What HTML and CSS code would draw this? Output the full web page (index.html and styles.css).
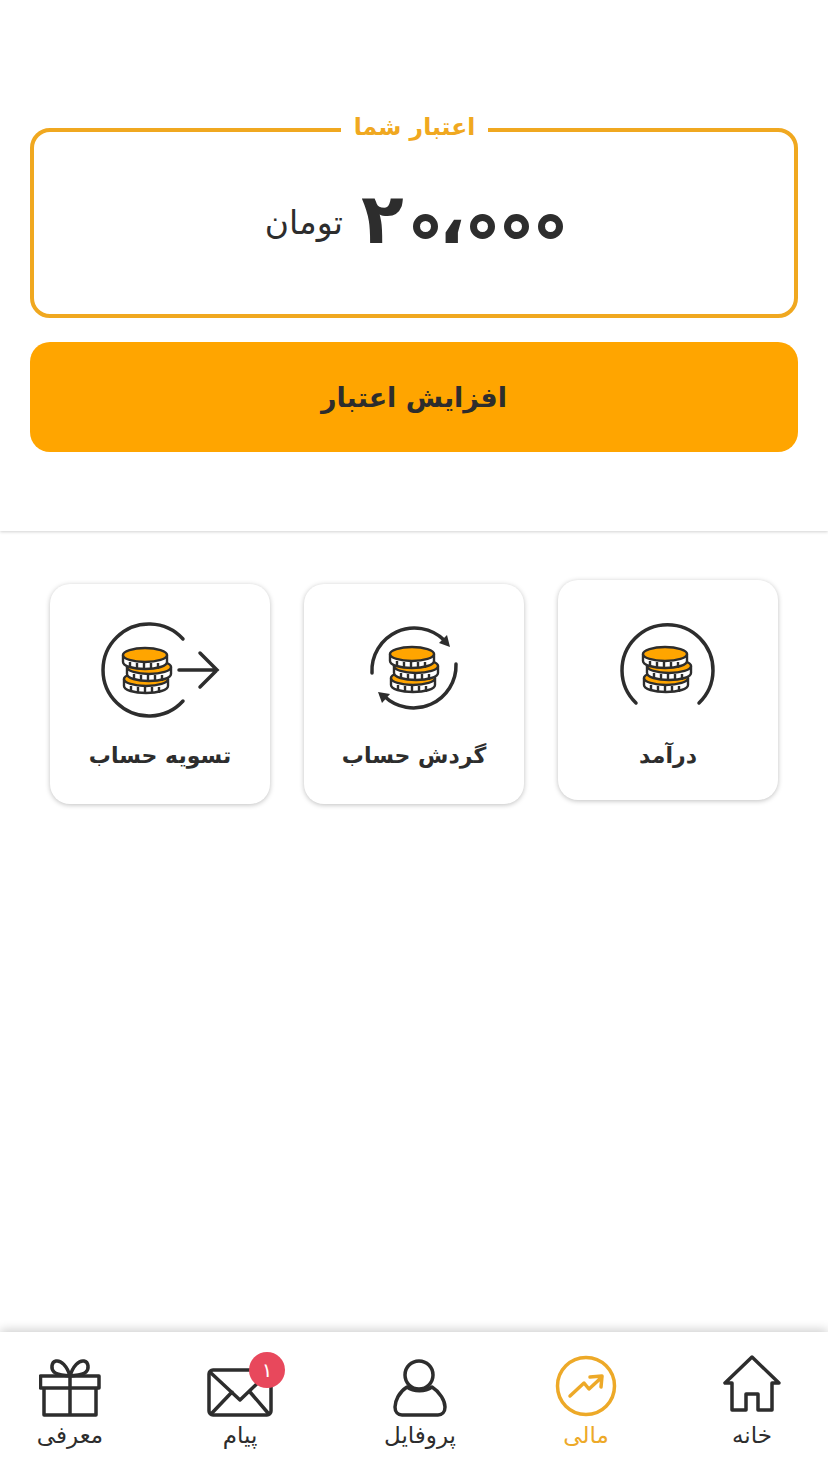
FILE: index.html
```html
<!DOCTYPE html>
<html lang="fa" dir="rtl">

<head>
  <meta charset="utf-8">
  <title>مالی</title>
  <link rel="stylesheet" href="styles.css">
</head>

<body>
  <!-- shared coin stack, used by the three cards -->
  <svg class="defs" width="0" height="0">
    <defs>
      <g id="coin">
        <path d="M1 8v7c0 4 10 7 22 7s22-3 22-7V8z" fill="#fff" stroke="#2d2d2d" stroke-width="2.400" stroke-linejoin="round" />
        <path d="M8 15v6M15 16v6M22 16v6M29 16v6M36 16v6" stroke="#2d2d2d" stroke-width="2.400" />
        <ellipse cx="23" cy="8" rx="22" ry="7" fill="#ffa500" stroke="#2d2d2d" stroke-width="2.400" />
      </g>
      <g id="coins">
        <use href="#coin" x="1" y="24" />
        <use href="#coin" x="4" y="12" />
        <use href="#coin" x="0" y="0" />
      </g>
    </defs>
  </svg>

  <section class="credit">
    <div class="credit-box">
      <div class="credit-title">اعتبار شما</div>
      <div class="credit-amount">
        <span class="amount"><span>۲</span><span class="zero">۰</span><span class="sep">،</span><span class="zero">۰</span><span class="zero">۰</span><span class="zero">۰</span></span>
        <span class="unit">تومان</span>
      </div>
    </div>
    <button class="add-btn">افزایش اعتبار</button>
  </section>

  <section class="cards">
    <a class="card card-first">
      <svg class="card-icon" width="100" height="100" viewBox="0 0 100 100">
        <path class="ring" d="M18 83A45.5 45.5 0 1 1 81 83" />
        <use href="#coins" x="24" y="26" />
      </svg>
      <span>درآمد</span>
    </a>
    <a class="card">
      <svg class="card-icon" width="100" height="100" viewBox="0 0 100 100">
        <path class="ring" d="M8 53A42.5 42.5 0 0 1 80 20" />
        <path d="M86 27L75 23L83 15z" fill="#2d2d2d" />
        <path class="ring" d="M92 44A42.5 42.5 0 0 1 20 76" />
        <path d="M14 72L26 74L18 83z" fill="#2d2d2d" />
        <use href="#coins" x="25" y="26" />
      </svg>
      <span>گردش حساب</span>
    </a>
    <a class="card">
      <svg class="card-icon" width="120" height="100" viewBox="0 0 120 100">
        <path class="ring" d="M83 19A46 46 0 1 0 83 81" />
        <path class="ring" d="M79 50H117M100 33L117 50L100 67" />
        <use href="#coins" x="22" y="27" />
      </svg>
      <span>تسویه حساب</span>
    </a>
  </section>

  <nav class="tabbar">
    <a class="tab tab-home">
      <svg width="60" height="62" viewBox="0 0 60 62">
        <path class="line" d="M30 2L3 28H10V55H24V39H36V55H50V28H57z" />
      </svg>
      <span>خانه</span>
    </a>
    <a class="tab tab-money active">
      <svg width="62" height="62" viewBox="0 0 62 62">
        <circle class="line" cx="31" cy="31" r="28.500" />
        <path class="line" d="M15 41L29 28L34 34L47 22M35 22L47 21L46 32" />
      </svg>
      <span>مالی</span>
    </a>
    <a class="tab tab-profile">
      <svg width="56" height="60" viewBox="0 0 56 60">
        <circle class="line" cx="27" cy="18" r="14" />
        <path class="line" d="M15 30C7 35 3 44 3 50C3 55 6 58 10 58H46C50 58 53 55 53 50C53 44 48 35 40 30C33 35 22 35 15 30z" />
      </svg>
      <span>پروفایل</span>
    </a>
    <a class="tab tab-msg">
      <span class="badge">۱</span>
      <svg width="68" height="50" viewBox="0 0 68 50">
        <rect class="line" x="3" y="3" width="62" height="45" rx="4" />
        <path class="line" d="M5 6L34 33L62 6M6 46L26 25M62 46L44 25" />
      </svg>
      <span>پیام</span>
    </a>
    <a class="tab tab-gift">
      <svg width="62" height="60" viewBox="0 0 62 60">
        <path class="line" d="M5 31H57V58H5zM1.500 19H60V31H1.500zM31 19V58" />
        <path class="line" d="M31 19C28 9 22 3 17 4C12 5 12 12 15 15C18 18 24 18 31 19C34 9 40 3 45 4C50 5 50 12 47 15C44 18 38 18 31 19z" />
      </svg>
      <span>معرفی</span>
    </a>
  </nav>
</body>

</html>
```

FILE: styles.css
```css
* {
  box-sizing: border-box;
}

body {
  margin: 0;
  height: 1472px;
  display: flex;
  flex-direction: column;
  background: white;
  color: #2d2d2d;
  font-family: "DejaVu Sans", sans-serif;
}

.defs {
  position: absolute;
}

.credit {
  padding: 128px 30px 79px;
  box-shadow: 0 1px 3px rgba(0, 0, 0, 0.18);
}

.credit-box {
  position: relative;
  height: 190px;
  border: 4px solid #f0a820;
  border-radius: 20px;
  display: flex;
  align-items: center;
  justify-content: center;
  padding-bottom: 8px;
}

.credit-title {
  position: absolute;
  top: -24px;
  left: 307px;
  width: 147px;
  background: white;
  color: #f0a820;
  font-size: 23.500px;
  font-weight: bold;
  text-align: center;
  line-height: 38px;
}

.credit-amount {
  display: flex;
  align-items: center;
  gap: 18px;
}

.amount {
  direction: ltr;
  display: flex;
  align-items: center;
  gap: 9px;
  font-size: 70px;
  line-height: 80px;
  font-weight: bold;
}

/* the persian zero is a solid diamond in this font, the design has rings */
.zero {
  width: 25px;
  height: 25px;
  margin-top: 14px;
  border: 7px solid #2d2d2d;
  border-radius: 50%;
  color: transparent;
  overflow: hidden;
  font-size: 10px;
  line-height: 10px;
}

.sep {
  margin: 0 -4px 0 -8px;
}

.unit {
  margin-top: 6px;
  font-size: 33px;
}

.add-btn {
  display: block;
  width: 100%;
  height: 110px;
  margin-top: 24px;
  border: none;
  border-radius: 20px;
  background: #ffa500;
  color: #2d2d2d;
  font-family: inherit;
  font-size: 27px;
  font-weight: bold;
}

.cards {
  display: flex;
  justify-content: center;
  gap: 34px;
  padding-top: 49px;
}

.card {
  width: 220px;
  height: 220px;
  margin-top: 4px;
  border-radius: 20px;
  background: white;
  box-shadow: 0 1px 5px rgba(0, 0, 0, 0.25);
  display: flex;
  flex-direction: column;
  align-items: center;
  padding-top: 36px;
  font-size: 22px;
  font-weight: bold;
}

.card-first {
  margin-top: 0;
  padding-top: 40px;
}

.card span {
  margin-top: 21px;
  line-height: 30px;
}

.ring {
  fill: none;
  stroke: #2d2d2d;
  stroke-width: 3.500;
  stroke-linecap: round;
}

.tabbar {
  margin-top: auto;
  height: 140px;
  display: flex;
  box-shadow: 0 -2px 10px rgba(0, 0, 0, 0.2);
}

.tab {
  position: relative;
  display: flex;
  flex-direction: column;
  align-items: center;
  font-size: 23px;
  line-height: 36px;
}

.tab svg {
  height: 62px;
  margin-top: 23px;
}

.tab-home {
  width: 152px;
}

.tab-money {
  width: 180px;
}

.tab-profile {
  width: 152px;
}

.tab-msg {
  width: 208px;
}

.tab-gift {
  width: 136px;
  padding-left: 4px;
}

.tab-msg svg {
  height: 50px;
  margin-top: 35px;
}

.tab-profile svg,
.tab-gift svg {
  height: 60px;
  margin-top: 25px;
}

.line {
  fill: none;
  stroke: #2d2d2d;
  stroke-width: 3.500;
  stroke-linejoin: round;
  stroke-linecap: round;
}

.active {
  color: #eda928;
}

.active .line {
  stroke: #eda928;
}

.badge {
  position: absolute;
  top: 20px;
  left: 113px;
  width: 36px;
  height: 36px;
  border-radius: 50%;
  background: #e8485c;
  color: white;
  font-size: 20px;
  line-height: 36px;
  text-align: center;
}
```
